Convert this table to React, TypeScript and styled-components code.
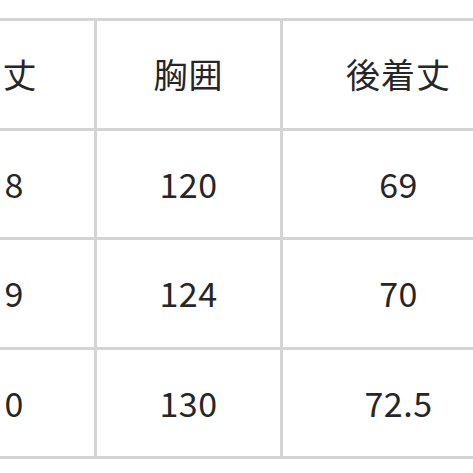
import styled, { createGlobalStyle } from "styled-components";

const GlobalStyle = createGlobalStyle`
  html, body {
    margin: 0;
    padding: 0;
    background: #ffffff;
  }
  body {
    font-family: "Noto Sans CJK JP", "Noto Sans", sans-serif;
  }
`;

const Viewport = styled.div`
  width: 473px;
  height: 473px;
  overflow: hidden;
  padding-top: 18px;
  box-sizing: border-box;
`;

const SizeTable = styled.table`
  border-collapse: collapse;
  table-layout: fixed;
  margin-left: -92px;
  width: 606px;
`;

const Cell = styled.td<{ $spacing: number; $shift?: number }>`
  border: 3px solid #d4d4d4;
  height: 106.5px;
  padding: 0 0 0 ${(p) => p.$shift ?? 0}px;
  text-align: center;
  vertical-align: middle;
  color: #262626;
  font-size: 34px;
  font-weight: 400;
  line-height: 1;
  white-space: nowrap;
  letter-spacing: ${(p) => p.$spacing}px;
`;

const columns = [186, 186, 234];
const header = ["着丈", "胸囲", "後着丈"];
const rows = [
  ["68", "120", "69"],
  ["69", "124", "70"],
  ["70", "130", "72.5"],
];

export default function App() {
  return (
    <>
      <GlobalStyle />
      <Viewport>
        <SizeTable>
          <colgroup>
            {columns.map((w, i) => (
              <col key={i} style={{ width: w }} />
            ))}
          </colgroup>
          <tbody>
            <tr>
              {header.map((h) => (
                <Cell key={h} $spacing={1}>
                  {h}
                </Cell>
              ))}
            </tr>
            {rows.map((r, i) => (
              <tr key={i}>
                {r.map((v, j) => (
                  <Cell
                    key={j}
                    $spacing={j === 0 ? 4 : 0.5}
                    $shift={j === 0 ? 4 : 0}
                  >
                    {v}
                  </Cell>
                ))}
              </tr>
            ))}
          </tbody>
        </SizeTable>
      </Viewport>
    </>
  );
}
